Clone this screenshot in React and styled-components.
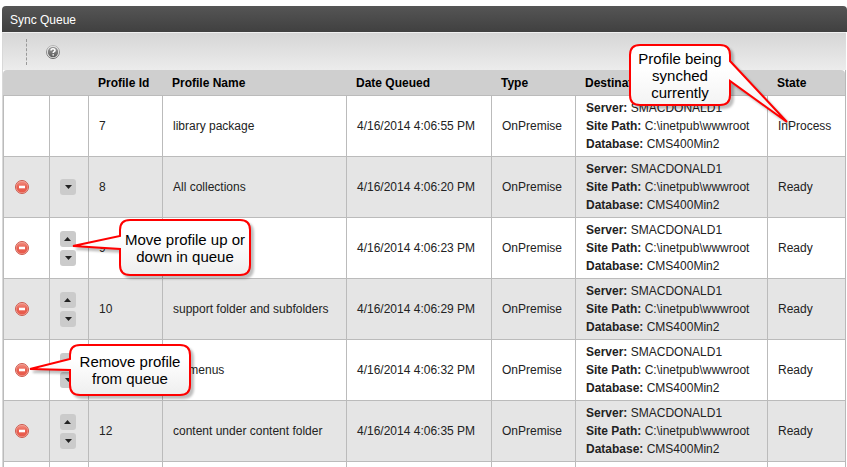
import React from "react";
import styled, { createGlobalStyle } from "styled-components";

const rows = [
  { id: 7, name: "library package", time: "4:06:55", state: "InProcess" },
  { id: 8, name: "All collections", time: "4:06:20", state: "Ready", down: true },
  { id: 9, name: "", time: "4:06:23", state: "Ready", up: true, down: true },
  { id: 10, name: "support folder and subfolders", time: "4:06:29", state: "Ready", up: true, down: true },
  { id: 11, name: "all menus", time: "4:06:32", state: "Ready", up: true, down: true },
  { id: 12, name: "content under content folder", time: "4:06:35", state: "Ready", up: true, down: true },
];

const HelpIcon = () => (
  <svg width="16" height="16" viewBox="0 0 16 16" aria-hidden="true">
    <defs>
      <linearGradient id="help" x1="0" y1="0" x2="0" y2="1">
        <stop offset="0" stopColor="#9a9a9a" />
        <stop offset="1" stopColor="#5c5c5c" />
      </linearGradient>
      <linearGradient id="helpRing" x1="0" y1="0" x2="0" y2="1">
        <stop offset="0" stopColor="#b4b4b4" />
        <stop offset="1" stopColor="#666" />
      </linearGradient>
    </defs>
    <circle cx="8" cy="8" r="6.5" fill="#eee" stroke="url(#helpRing)" />
    <circle cx="8" cy="8" r="5.2" fill="url(#help)" />
    <path
      d="M6 6.6C6 5.2 6.8 4.7 8 4.7s2 .6 2 1.7c0 1.3-1.800 1.3-1.800 2.600M8.200 10.200v1.400"
      fill="none"
      stroke="#fff"
      strokeWidth="1.6"
    />
  </svg>
);

const RemoveIcon = () => (
  <svg width="16" height="16" viewBox="0 0 16 16" aria-hidden="true">
    <defs>
      <linearGradient id="remove" x1="0" y1="0" x2="0" y2="1">
        <stop offset="0" stopColor="#f28d80" />
        <stop offset="0.5" stopColor="#e95f50" />
        <stop offset="1" stopColor="#e85a4b" />
      </linearGradient>
    </defs>
    <circle cx="8" cy="8" r="6.500" fill="#f6b0a6" stroke="#cb5a4e" />
    <circle cx="8" cy="8" r="5.600" fill="url(#remove)" />
    <rect x="5" y="6.700" width="6" height="2.600" fill="#fff" />
  </svg>
);

const Arrow = ({ up }) => (
  <svg width="16" height="16" viewBox="0 0 16 16" aria-hidden="true">
    <path d={up ? "M4 10 7.5 6 11 10z" : "M5 6h7L8.5 10z"} fill="#222" />
  </svg>
);

// tail is [base start, tip, base end]; side is the edge it leaves from
const Callout = ({ x, y, width, height, side, tail, children }) => {
  const [a, tip, b] = tail;
  const w = width;
  const h = height;
  const r = 10;
  const right = side === "right" ? `V${a} L${tip} L${w} ${b}` : "";
  const left = side === "left" ? `V${b} L${tip} L0 ${a}` : "";
  const d = `M${r} 0H${w - r}Q${w} 0 ${w} ${r}${right}V${h - r}Q${w} ${h} ${w - r} ${h}H${r}Q0 ${h} 0 ${h - r}${left}V${r}Q0 0 ${r} 0z`;

  return (
    <Bubble $x={x} $y={y} $width={width} $height={height}>
      <BubbleShape aria-hidden="true">
        <defs>
          <linearGradient id="bubble" x1="0" y1="0" x2="0" y2="1">
            <stop offset="0.3" stopColor="#fff" />
            <stop offset="1" stopColor="#eee" />
          </linearGradient>
        </defs>
        <path d={d} fill="url(#bubble)" stroke="#f00" strokeWidth="2" />
      </BubbleShape>
      <BubbleText>{children}</BubbleText>
    </Bubble>
  );
};

const App = () => (
  <>
    <GlobalStyle />
    <Panel>
      <TitleBar>Sync Queue</TitleBar>
      <Toolbar>
        <Separator />
        <IconButton aria-label="Help">
          <HelpIcon />
        </IconButton>
      </Toolbar>
      <Table>
        <colgroup>
          <Col $width={46} />
          <Col $width={39} />
          <Col $width={74} />
          <Col />
          <Col $width={145} />
          <Col $width={84} />
          <Col $width={192} />
          <Col $width={78} />
        </colgroup>
        <thead>
          <tr>
            <HeadCell />
            <HeadCell />
            <HeadCell>Profile Id</HeadCell>
            <HeadCell>Profile Name</HeadCell>
            <HeadCell>Date Queued</HeadCell>
            <HeadCell>Type</HeadCell>
            <HeadCell>Destination</HeadCell>
            <HeadCell>State</HeadCell>
          </tr>
        </thead>
        <tbody>
          {rows.map(({ id, name, time, state, up, down }) => (
            <Row key={id}>
              <Cell>
                {state === "Ready" && (
                  <IconButton aria-label="Remove">
                    <RemoveIcon />
                  </IconButton>
                )}
                {id === 11 && (
                  <Callout x={66} y={5} width={120} height={50} side="left" tail={[14, "-40 24", 25]}>
                    Remove profile
                    <br />
                    from queue
                  </Callout>
                )}
              </Cell>
              <Cell>
                <Arrows>
                  {up && (
                    <MoveButton aria-label="Move up">
                      <Arrow up />
                    </MoveButton>
                  )}
                  {down && (
                    <MoveButton aria-label="Move down">
                      <Arrow />
                    </MoveButton>
                  )}
                </Arrows>
                {id === 9 && (
                  <Callout x={70} y={2} width={130} height={55} side="left" tail={[16, "-47 26", 29]}>
                    Move profile up or
                    <br />
                    down in queue
                  </Callout>
                )}
              </Cell>
              <Cell>{id}</Cell>
              <Cell>{name}</Cell>
              <Cell>4/16/2014 {time} PM</Cell>
              <Cell>OnPremise</Cell>
              <Cell>
                <b>Server:</b> SMACDONALD1
                <br />
                <b>Site Path:</b> C:\inetpub\wwwroot
                <br />
                <b>Database:</b> CMS400Min2
              </Cell>
              <Cell>
                {state}
                {id === 7 && (
                  <Callout x={-138} y={-51} width={100} height={60} side="right" tail={[16, "157 77", 36]}>
                    Profile being
                    <br />
                    synched
                    <br />
                    currently
                  </Callout>
                )}
              </Cell>
            </Row>
          ))}
          <Row>
            <Cell />
            <Cell />
            <Cell />
            <Cell />
            <Cell />
            <Cell />
            <Cell />
            <Cell />
          </Row>
        </tbody>
      </Table>
    </Panel>
  </>
);

const GlobalStyle = createGlobalStyle`
  * {
    box-sizing: border-box;
  }

  body {
    margin: 0;
    background: #fff;
    color: #222;
    font: 12px/18px "Liberation Sans", Arial, sans-serif;
  }
`;

const Panel = styled.main`
  height: 100vh;
  overflow: hidden;
  padding: 6px 0 0 2px;
`;

const TitleBar = styled.header`
  height: 26px;
  padding: 0 8px;
  border-radius: 4px 4px 0 0;
  background: linear-gradient(#555, #404040);
  color: #fff;
  line-height: 28px;
`;

const Toolbar = styled.div`
  display: flex;
  align-items: center;
  gap: 18px;
  height: 38px;
  padding: 1px 23px 0;
  margin-right: 1px;
  border-top: 1px solid #f0f0f0;
  border-left: 1px solid #d8d8d8;
  background: linear-gradient(#d6d6d6, #ececec);
`;

const Separator = styled.div`
  height: 26px;
  border-left: 1px dashed #999;
`;

const IconButton = styled.button`
  display: block;
  padding: 0;
  border: 0;
  background: none;

  svg {
    display: block;
  }
`;

const Table = styled.table`
  width: calc(100% - 1px);
  table-layout: fixed;
  border-spacing: 0;
  border-left: 1px solid #d8d8d8;
  border-right: 1px solid #b8b8b8;
`;

const Col = styled.col`
  width: ${(props) => (props.$width ? `${props.$width}px` : "auto")};
`;

const HeadCell = styled.th`
  height: 26px;
  padding: 0 10px;
  background: #cfcfcf;
  border-bottom: 1px solid #bbb;
  color: #000;
  text-align: left;
  white-space: nowrap;

  &:first-child {
    border-top-left-radius: 4px;
  }

  &:last-child {
    border-top-right-radius: 4px;
  }
`;

const Row = styled.tr`
  height: 61px;

  &:nth-child(even) {
    background: #e5e5e5;
  }
`;

const Cell = styled.td`
  position: relative;
  padding: 3px 10px;
  border-left: 1px solid #bbb;
  border-bottom: 1px solid #bbb;
  white-space: nowrap;
`;

const Arrows = styled.div`
  display: flex;
  flex-direction: column;
  gap: 3px;
`;

const MoveButton = styled(IconButton)`
  width: 16px;
  border-radius: 3px;
  background: #cbcbcb;
`;

const Bubble = styled.div`
  position: absolute;
  z-index: 2;
  left: ${(props) => props.$x}px;
  top: ${(props) => props.$y}px;
  width: ${(props) => props.$width}px;
  height: ${(props) => props.$height}px;
  display: flex;
  align-items: center;
  justify-content: center;
`;

const BubbleShape = styled.svg`
  position: absolute;
  inset: 0;
  width: 100%;
  height: 100%;
  overflow: visible;
  filter: drop-shadow(3px 3px 1px rgba(0, 0, 0, 0.25));
`;

const BubbleText = styled.div`
  position: relative;
  color: #000;
  font-size: 15px;
  line-height: 17px;
  text-align: center;
`;

export default App;
